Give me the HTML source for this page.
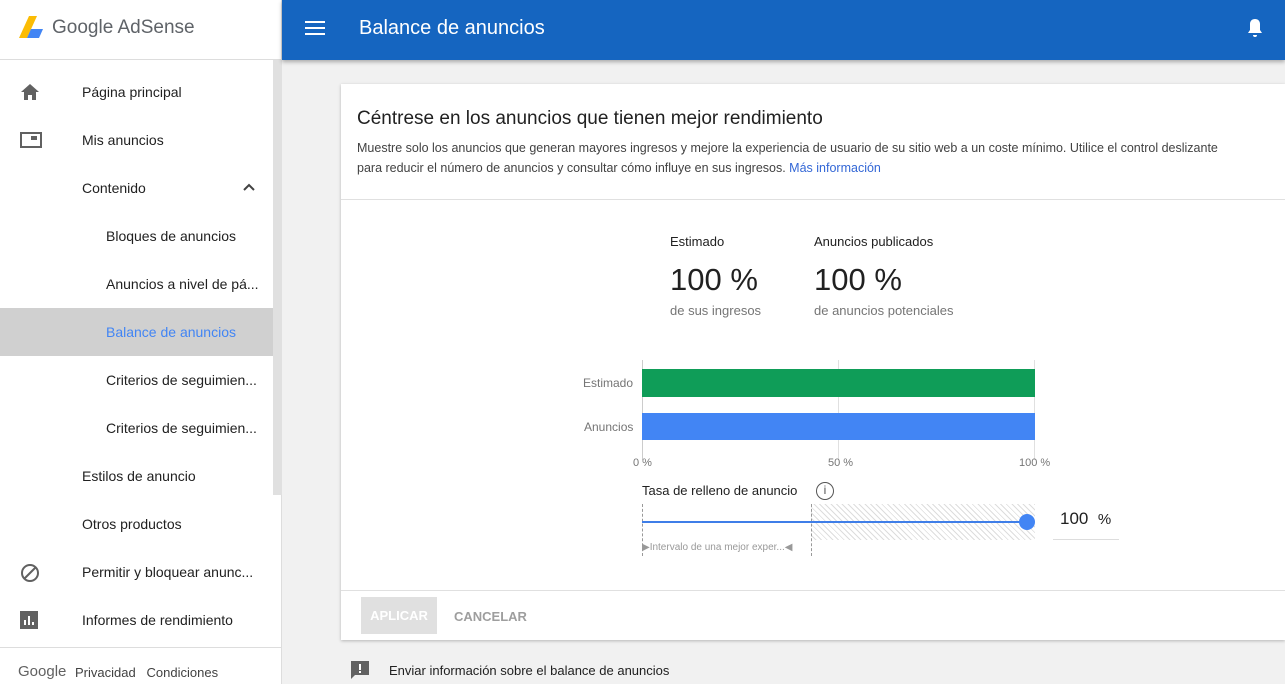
<!DOCTYPE html>
<html><head><meta charset="utf-8"><style>
*{margin:0;padding:0;box-sizing:border-box}
body{width:1285px;height:684px;overflow:hidden;font-family:"Liberation Sans",Roboto,sans-serif;background:#f1f1f1;position:relative;color:#212121}
.abs{position:absolute}
#side{left:0;top:0;width:282px;height:684px;background:#fff;border-right:1px solid #ddd}
.nav{position:absolute;font-size:14px;color:#212121}
.ic{position:absolute;left:20px}
#hdr{left:282px;top:0;width:1003px;height:60px;background:#1565c0;box-shadow:0 2px 4px rgba(0,0,0,.3)}
#card{left:341px;top:84px;width:944px;height:556px;background:#fff;box-shadow:0 1px 3px rgba(0,0,0,.25)}
.g{color:#757575}
</style></head><body>
<div id="side" class="abs">
 <svg class="abs" style="left:19px;top:16px" width="26" height="24" viewBox="0 0 26 24"><polygon points="10,0 18,0 8,22 0,22" fill="#fbbc04"/><polygon points="12,13 24,13 20,22 8,22" fill="#4285f4"/></svg>
 <div class="abs" style="left:52px;top:17px;font-size:19px;color:#5f6368">Google AdSense</div>
 <div class="abs" style="left:0;top:59px;width:282px;height:1px;background:#ddd"></div>
 <div class="abs" style="left:273px;top:60px;width:9px;height:435px;background:#e0e0e0"></div>
 <div class="abs" style="left:0;top:308px;width:273px;height:48px;background:#d0d0d0"></div>
 <svg class="ic" style="top:83px" width="20" height="18" viewBox="0 0 20 18"><path d="M10 1L1 9h3v8h4v-5h4v5h4V9h3z" fill="#616161"/></svg>
 <svg class="ic" style="top:132px" width="22" height="16" viewBox="0 0 22 16"><rect x="1" y="1" width="20" height="14" fill="none" stroke="#616161" stroke-width="2"/><rect x="11" y="4" width="6" height="4" fill="#616161"/></svg>
 <svg class="ic" style="top:563px" width="20" height="20" viewBox="0 0 20 20"><circle cx="10" cy="10" r="8" fill="none" stroke="#616161" stroke-width="2"/><path d="M4 16L16 4" stroke="#616161" stroke-width="2"/></svg>
 <svg class="ic" style="top:611px" width="18" height="18" viewBox="0 0 18 18"><rect x="0" y="0" width="18" height="18" fill="#616161"/><rect x="4" y="9" width="2" height="5" fill="#fff"/><rect x="8" y="5" width="2" height="9" fill="#fff"/><rect x="12" y="11" width="2" height="3" fill="#fff"/></svg>
 <div class="nav" style="left:82px;top:84px">Página principal</div>
 <div class="nav" style="left:82px;top:132px">Mis anuncios</div>
 <div class="nav" style="left:82px;top:180px">Contenido</div>
 <svg class="abs" style="left:242px;top:182px" width="14" height="10" viewBox="0 0 14 10"><path d="M2 8L7 3l5 5" fill="none" stroke="#424242" stroke-width="2"/></svg>
 <div class="nav" style="left:106px;top:228px">Bloques de anuncios</div>
 <div class="nav" style="left:106px;top:276px">Anuncios a nivel de pá...</div>
 <div class="nav" style="left:106px;top:324px;color:#4285f4">Balance de anuncios</div>
 <div class="nav" style="left:106px;top:372px">Criterios de seguimien...</div>
 <div class="nav" style="left:106px;top:420px">Criterios de seguimien...</div>
 <div class="nav" style="left:82px;top:468px">Estilos de anuncio</div>
 <div class="nav" style="left:82px;top:516px">Otros productos</div>
 <div class="nav" style="left:82px;top:564px">Permitir y bloquear anunc...</div>
 <div class="nav" style="left:82px;top:612px">Informes de rendimiento</div>
 <div class="abs" style="left:0;top:647px;width:282px;height:1px;background:#ddd"></div>
 <div class="abs" style="left:18px;top:663px;font-size:15px;color:#616161">Google</div>
 <div class="abs" style="left:75px;top:665px;font-size:13px;color:#424242">Privacidad&nbsp;&nbsp; Condiciones</div>
</div>
<div id="hdr" class="abs">
 <div class="abs" style="left:23px;top:21px;width:20px;height:2px;background:#fff;box-shadow:0 6px 0 #fff,0 12px 0 #fff"></div>
 <div class="abs" style="left:77px;top:17px;font-size:20px;color:#fff">Balance de anuncios</div>
 <svg class="abs" style="left:964px;top:18px" width="18" height="20" viewBox="0 0 18 20"><path d="M9 1c-3 0-5 2-5 5v6l-2 3h14l-2-3V6c0-3-2-5-5-5zM7 17h4a2 2 0 0 1-4 0z" fill="#fff"/></svg>
</div>
<div id="card" class="abs">
 <div class="abs" style="left:16px;top:24px;font-size:19px;color:#212121">Céntrese en los anuncios que tienen mejor rendimiento</div>
 <div class="abs" style="left:16px;top:54px;width:880px;font-size:12.5px;line-height:20px;color:#424242">Muestre solo los anuncios que generan mayores ingresos y mejore la experiencia de usuario de su sitio web a un coste mínimo. Utilice el control deslizante para reducir el número de anuncios y consultar cómo influye en sus ingresos. <span style="color:#3367d6">Más información</span></div>
 <div class="abs" style="left:0;top:115px;width:944px;height:1px;background:#e0e0e0"></div>
 <div class="abs" style="left:329px;top:150px;font-size:13px">Estimado</div>
 <div class="abs" style="left:473px;top:150px;font-size:13px">Anuncios publicados</div>
 <div class="abs" style="left:329px;top:178px;font-size:31px">100 %</div>
 <div class="abs" style="left:473px;top:178px;font-size:31px">100 %</div>
 <div class="abs g" style="left:329px;top:219px;font-size:13px">de sus ingresos</div>
 <div class="abs g" style="left:473px;top:219px;font-size:13px">de anuncios potenciales</div>
 <div class="abs" style="left:301px;top:276px;width:1px;height:100px;background:#ccc"></div>
 <div class="abs" style="left:497px;top:276px;width:1px;height:100px;background:#e0e0e0"></div>
 <div class="abs" style="left:693px;top:276px;width:1px;height:100px;background:#e0e0e0"></div>
 <div class="abs" style="left:301px;top:285px;width:393px;height:28px;background:#0f9d58"></div>
 <div class="abs" style="left:301px;top:329px;width:393px;height:27px;background:#4285f4"></div>
 <div class="abs g" style="left:242px;top:292px;font-size:12px">Estimado</div>
 <div class="abs g" style="left:243px;top:336px;font-size:12px">Anuncios</div>
 <div class="abs g" style="left:292px;top:373px;font-size:11px">0 %</div>
 <div class="abs g" style="left:487px;top:373px;font-size:11px">50 %</div>
 <div class="abs g" style="left:678px;top:373px;font-size:11px">100 %</div>
 <div class="abs" style="left:301px;top:399px;font-size:13px">Tasa de relleno de anuncio</div>
 <div class="abs" style="left:475px;top:398px;width:18px;height:18px;border:1.5px solid #555;border-radius:50%;font-size:12px;text-align:center;line-height:15px;color:#555">i</div>
 <div class="abs" style="left:470px;top:420px;width:224px;height:36px;background:repeating-linear-gradient(45deg,#fff 0 3px,#ddd 3px 4px)"></div>
 <div class="abs" style="left:301px;top:420px;height:52px;border-left:1px dashed #999"></div>
 <div class="abs" style="left:470px;top:420px;height:52px;border-left:1px dashed #999"></div>
 <div class="abs" style="left:301px;top:437px;width:385px;height:2px;background:#3f7ee8"></div>
 <div class="abs" style="left:678px;top:430px;width:16px;height:16px;border-radius:50%;background:#4285f4"></div>
 <div class="abs" style="left:301px;top:458px;font-size:10px;color:#999">▶Intervalo de una mejor exper...◀</div>
 <div class="abs" style="left:719px;top:425px;font-size:17px">100&nbsp; <span style="font-size:15px">%</span></div>
 <div class="abs" style="left:712px;top:455px;width:66px;height:1px;background:#ddd"></div>
 <div class="abs" style="left:0;top:506px;width:944px;height:1px;background:#e0e0e0"></div>
 <div class="abs" style="left:20px;top:513px;width:76px;height:37px;background:#e0e0e0;color:#fff;font-size:13px;font-weight:bold;text-align:center;line-height:37px">APLICAR</div>
 <div class="abs" style="left:113px;top:525px;font-size:13px;font-weight:bold;color:#9e9e9e">CANCELAR</div>
</div>
<svg class="abs" style="left:350px;top:660px" width="20" height="20" viewBox="0 0 20 20"><path d="M1 1h18v14H5l-4 4z" fill="#616161"/><rect x="9" y="4" width="2" height="6" fill="#fff"/><rect x="9" y="11" width="2" height="2" fill="#fff"/></svg>
<div class="abs" style="left:389px;top:663px;font-size:13px">Enviar información sobre el balance de anuncios</div>
</body></html>
